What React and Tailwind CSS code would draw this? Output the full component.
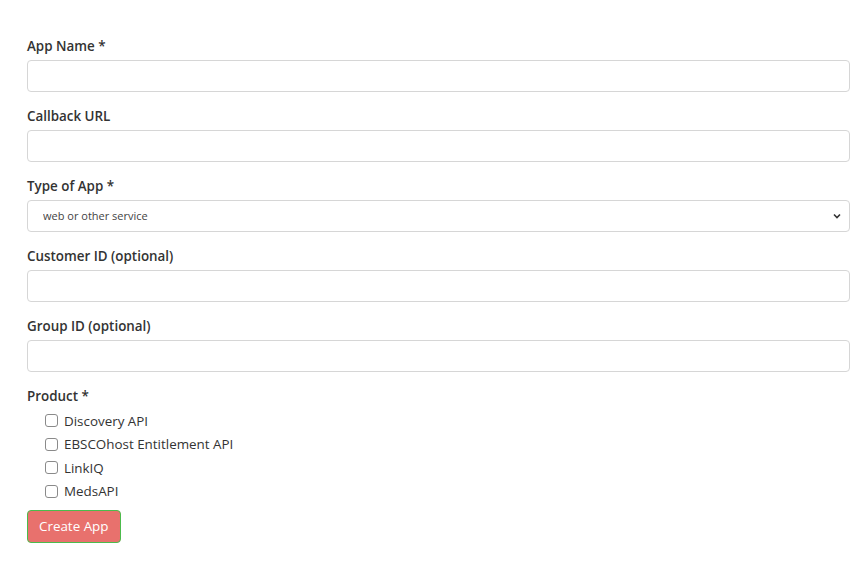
import React from 'react';

const fields = [
  { label: 'App Name *', type: 'text' },
  { label: 'Callback URL', type: 'text' },
  { label: 'Type of App *', type: 'select' },
  { label: 'Customer ID (optional)', type: 'text' },
  { label: 'Group ID (optional)', type: 'text' },
];

const products = ['Discovery API', 'EBSCOhost Entitlement API', 'LinkIQ', 'MedsAPI'];

const App = () => {
  return (
    <div className="min-h-[580px] bg-white pl-[27px] pr-[16px] pt-[36px] text-[#333] font-['Open_Sans',sans-serif]">
      <form className="flex flex-col">
        {fields.map((f) => (
          <div key={f.label} className="mb-[14px]">
            <label className="block text-[13.4px] leading-[20px] font-semibold mb-[4px]">{f.label}</label>
            {f.type === 'select' ? (
              <div className="relative">
                <select className="appearance-none block w-full h-[32px] pl-[15px] pr-8 border border-[#d6d6d6] rounded-[4px] bg-white text-[11px] text-[#444] outline-none">
                  <option>web or other service</option>
                </select>
                <svg className="absolute right-[9px] top-[13px] pointer-events-none" width="8" height="6" viewBox="0 0 8 6">
                  <path d="M1 1.5 L4 4.5 L7 1.5" fill="none" stroke="#333" strokeWidth="1.6" />
                </svg>
              </div>
            ) : (
              <input
                type="text"
                className="block w-full h-[32px] px-3 border border-[#d6d6d6] rounded-[4px] bg-white outline-none"
              />
            )}
          </div>
        ))}
        <div>
          <label className="block text-[13.4px] leading-[20px] font-semibold">Product *</label>
          <div className="mt-[3px]">
            {products.map((p) => (
              <div key={p} className="flex items-center h-[23.5px] pl-[18px]">
                <span className="w-[13px] h-[13px] border border-[#8a8a8a] rounded-[3px] bg-white"></span>
                <span className="ml-[6px] text-[13.4px] text-[#333]">{p}</span>
              </div>
            ))}
          </div>
        </div>
        <div className="mt-[7px]">
          <button
            type="button"
            className="h-[33px] px-[11px] rounded-[4px] border border-[#4cbb4c] bg-[#e8716d] text-white text-[13.4px]"
          >
            Create App
          </button>
        </div>
      </form>
    </div>
  );
};

export default App;
